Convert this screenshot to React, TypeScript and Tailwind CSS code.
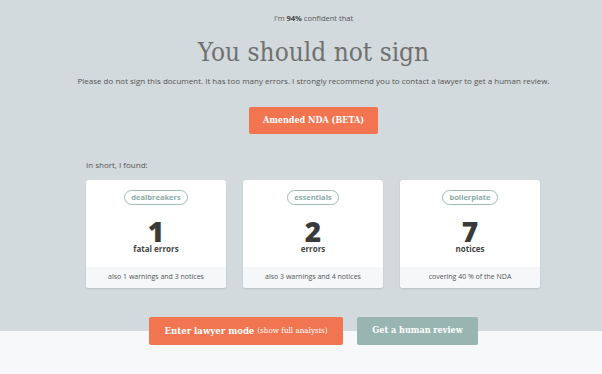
import React from "react";

const slab = { fontFamily: '"DejaVu Serif Condensed", "DejaVu Serif", serif' };

function Card({ tag, num, label, foot }: { tag: string; num: string; label: string; foot: string }) {
  return (
    <div className="w-[140px] h-[108px] bg-white rounded-[3px] shadow-[0_1px_2px_rgba(0,0,0,0.12)] flex flex-col overflow-hidden">
      <div className="flex-1 flex flex-col items-center pt-[10px]">
        <div className="h-[15px] px-[6px] rounded-full border-[1.5px] border-[#9dbcb7] text-[#8aaca6] text-[7.5px] font-bold flex items-center leading-none">
          {tag}
        </div>
        <div className="text-[28px] font-extrabold text-[#3a3a3a] leading-[22px] mt-[15px]" style={{ fontFamily: '"Open Sans", sans-serif' }}>
          {num}
        </div>
        <div className="text-[8px] font-bold text-[#444] leading-[9px] mt-[2px]">{label}</div>
      </div>
      <div className="h-[21px] bg-[#f5f7f9] flex items-center justify-center text-[7px] text-[#555]">{foot}</div>
    </div>
  );
}

export default function App() {
  return (
    <div
      className="w-[602px] h-[374px] overflow-hidden pl-[25px] flex flex-col items-center bg-[linear-gradient(to_bottom,#d3dadd_331px,#f6f8fa_331px)] text-[#555]"
      style={{ fontFamily: '"Open Sans", sans-serif' }}
    >
      <div className="mt-[12px] text-[7.5px] leading-[12px] text-[#555]">
        I'm <b className="text-[#444]">94%</b> confident that
      </div>
      <h1 className="mt-[12px] text-[26px] leading-[32px] text-[#707070] font-light" style={slab}>
        You should not sign
      </h1>
      <p className="mt-[7px] text-[8px] leading-[12px] text-[#555] whitespace-nowrap">
        Please do not sign this document. It has too many errors. I strongly recommend you to contact a lawyer to get a human review.
      </p>
      <button
        className="mt-[20px] w-[129px] h-[27px] rounded-[2px] bg-[#f07550] text-white text-[9px] font-bold flex items-center justify-center"
        style={slab}
      >
        Amended NDA (BETA)
      </button>
      <div className="w-[455px] mt-[25px]">
        <div className="text-[8px] leading-[12px] text-[#555]">In short, I found:</div>
        <div className="flex gap-[17px] mt-[9px]">
          <Card tag="dealbreakers" num="1" label="fatal errors" foot="also 1 warnings and 3 notices" />
          <Card tag="essentials" num="2" label="errors" foot="also 3 warnings and 4 notices" />
          <Card tag="boilerplate" num="7" label="notices" foot="covering 40 % of the NDA" />
        </div>
      </div>
      <div className="flex gap-[14px] mt-[29px]">
        <button
          className="w-[194px] h-[28px] rounded-[2px] bg-[#f07550] text-white flex items-center justify-center gap-[3px]"
          style={slab}
        >
          <span className="text-[9.5px] font-bold">Enter lawyer mode</span>
          <span className="text-[8px]">(show full analysis)</span>
        </button>
        <button
          className="w-[121px] h-[28px] rounded-[2px] bg-[#98b5b1] text-white text-[9px] font-bold flex items-center justify-center"
          style={slab}
        >
          Get a human review
        </button>
      </div>
    </div>
  );
}
